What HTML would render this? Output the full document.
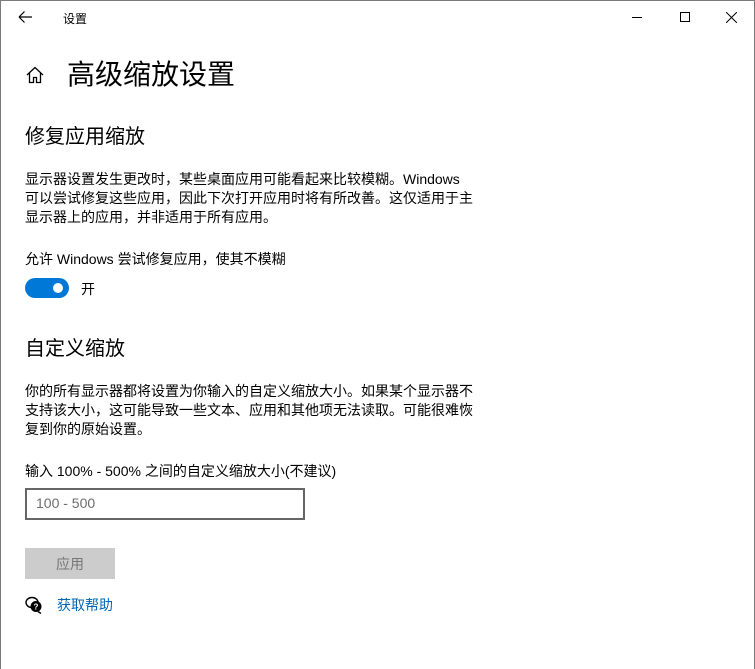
<!DOCTYPE html>
<html><head><meta charset="utf-8"><style>
*{margin:0;padding:0;box-sizing:border-box}
html,body{width:755px;height:669px;overflow:hidden;background:#fff}
body{font-family:"Liberation Sans","Noto Sans CJK SC",sans-serif;color:#000;position:relative}
.a{position:absolute;white-space:nowrap}
.p{font-size:14px;line-height:19px}
</style></head><body>
<div class="a" style="left:0;top:0;width:755px;height:1px;background:#7a7a7a"></div>
<div class="a" style="left:0;top:0;width:1px;height:669px;background:#7a7a7a"></div>
<div class="a" style="right:0;top:0;width:1px;height:669px;background:#7a7a7a"></div>
<svg class="a" style="left:17px;top:9px" width="16" height="16" viewBox="0 0 16 16"><path d="M2 8H15M2 8L7.5 2.5M2 8L7.5 13.5" stroke="#000" stroke-width="1.2" fill="none"/></svg>
<div class="a" style="left:63px;top:10px;font-size:12px">设置</div>
<div class="a" style="left:632px;top:17px;width:10px;height:1px;background:#000"></div>
<div class="a" style="left:680px;top:12px;width:10px;height:10px;border:1px solid #000"></div>
<svg class="a" style="left:726px;top:12px" width="11" height="11"><path d="M0 0L11 11M11 0L0 11" stroke="#000" stroke-width="1"/></svg>
<svg class="a" style="left:25px;top:66px" width="20" height="18" viewBox="0 0 20 18"><path d="M2 9L10 1.5L18 9M4.5 7V16.5H8.5V11.5H11.5V16.5H15.5V7" stroke="#000" stroke-width="1.3" fill="none"/></svg>
<div class="a" style="left:67px;top:56px;font-size:28px;line-height:38px">高级缩放设置</div>
<div class="a" style="left:25px;top:123px;font-size:20px;line-height:28px">修复应用缩放</div>
<div class="a p" style="left:25px;top:170px">显示器设置发生更改时，某些桌面应用可能看起来比较模糊。Windows<br>可以尝试修复这些应用，因此下次打开应用时将有所改善。这仅适用于主<br>显示器上的应用，并非适用于所有应用。</div>
<div class="a p" style="left:25px;top:250px">允许 Windows 尝试修复应用，使其不模糊</div>
<div class="a" style="left:25px;top:278px;width:44px;height:20px;border-radius:10px;background:#0078d7"></div>
<div class="a" style="left:53px;top:283px;width:10px;height:10px;border-radius:50%;background:#fff"></div>
<div class="a p" style="left:81px;top:280px">开</div>
<div class="a" style="left:25px;top:335px;font-size:20px;line-height:28px">自定义缩放</div>
<div class="a p" style="left:25px;top:382px">你的所有显示器都将设置为你输入的自定义缩放大小。如果某个显示器不<br>支持该大小，这可能导致一些文本、应用和其他项无法读取。可能很难恢<br>复到你的原始设置。</div>
<div class="a p" style="left:25px;top:462px">输入 100% - 500% 之间的自定义缩放大小(不建议)</div>
<div class="a" style="left:25px;top:488px;width:280px;height:32px;border:2px solid #666"></div>
<div class="a p" style="left:36px;top:494px;color:#6d6d6d">100 - 500</div>
<div class="a" style="left:25px;top:548px;width:90px;height:31px;background:#ccc"></div>
<div class="a p" style="left:56px;top:555px;color:#777">应用</div>
<svg class="a" style="left:25px;top:596px" width="18" height="18" viewBox="0 0 18 18"><ellipse cx="7" cy="6.5" rx="6" ry="5" fill="#fff" stroke="#000" stroke-width="1.4"/><circle cx="11" cy="10.5" r="5.5" fill="#000"/><path d="M13 15.5L16 17.5" stroke="#000" stroke-width="1.4"/><text x="11" y="13.5" font-size="8" font-weight="bold" fill="#fff" text-anchor="middle" font-family="Liberation Sans">?</text></svg>
<div class="a p" style="left:57px;top:596px;color:#0066b4">获取帮助</div>
</body></html>
